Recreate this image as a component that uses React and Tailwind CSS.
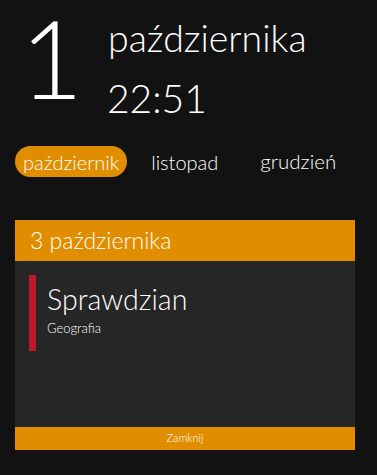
import React from "react";

const light = { fontFamily: "'Lato Light', Lato, 'Open Sans', sans-serif", fontWeight: 300 };

export default function App() {
  return (
    <div className="w-[377px] h-[475px] bg-[#121212] text-white overflow-hidden" style={{ fontFamily: "Lato, 'Open Sans', sans-serif" }}>
      <div className="flex pl-[20px] pt-[2px] h-[128px]">
        <div className="text-[109px] leading-[1.1] w-[88px] -mt-[5px]" style={light}>1</div>
        <div className="flex flex-col">
          <div className="text-[37.5px] leading-none mt-[17px]" style={light}>października</div>
          <div className="text-[39px] leading-none mt-[22px] -ml-[1px]" style={light}>22:51</div>
        </div>
      </div>
      <div className="flex items-center pl-[15px] mt-[18px] text-[20px] leading-none" style={light}>
        <div className="bg-[#e08e00] rounded-full h-[31px] px-[8px] flex items-center">październik</div>
        <div className="ml-[24px]">listopad</div>
        <div className="ml-[42px] text-[20.5px]">grudzień</div>
      </div>
      <div className="mx-[15px] mt-[43px] w-[340px] flex flex-col">
        <div className="bg-[#e08e00] h-[41px] flex items-center pl-[15px] text-[23px]" style={light}>3 października</div>
        <div className="bg-[#262626] h-[166px] pt-[14px] pl-[14px]">
          <div className="flex">
            <div className="w-[7px] h-[76px] bg-[#c0182a]"></div>
            <div className="pl-[11px] pt-[10px]">
              <div className="text-[28.6px] leading-none" style={light}>Sprawdzian</div>
              <div className="text-[13px] leading-none mt-[8px]" style={light}>Geografia</div>
            </div>
          </div>
        </div>
        <div className="bg-[#e08e00] h-[23px] flex items-center justify-center text-[11px]" style={light}>Zamknij</div>
      </div>
    </div>
  );
}
